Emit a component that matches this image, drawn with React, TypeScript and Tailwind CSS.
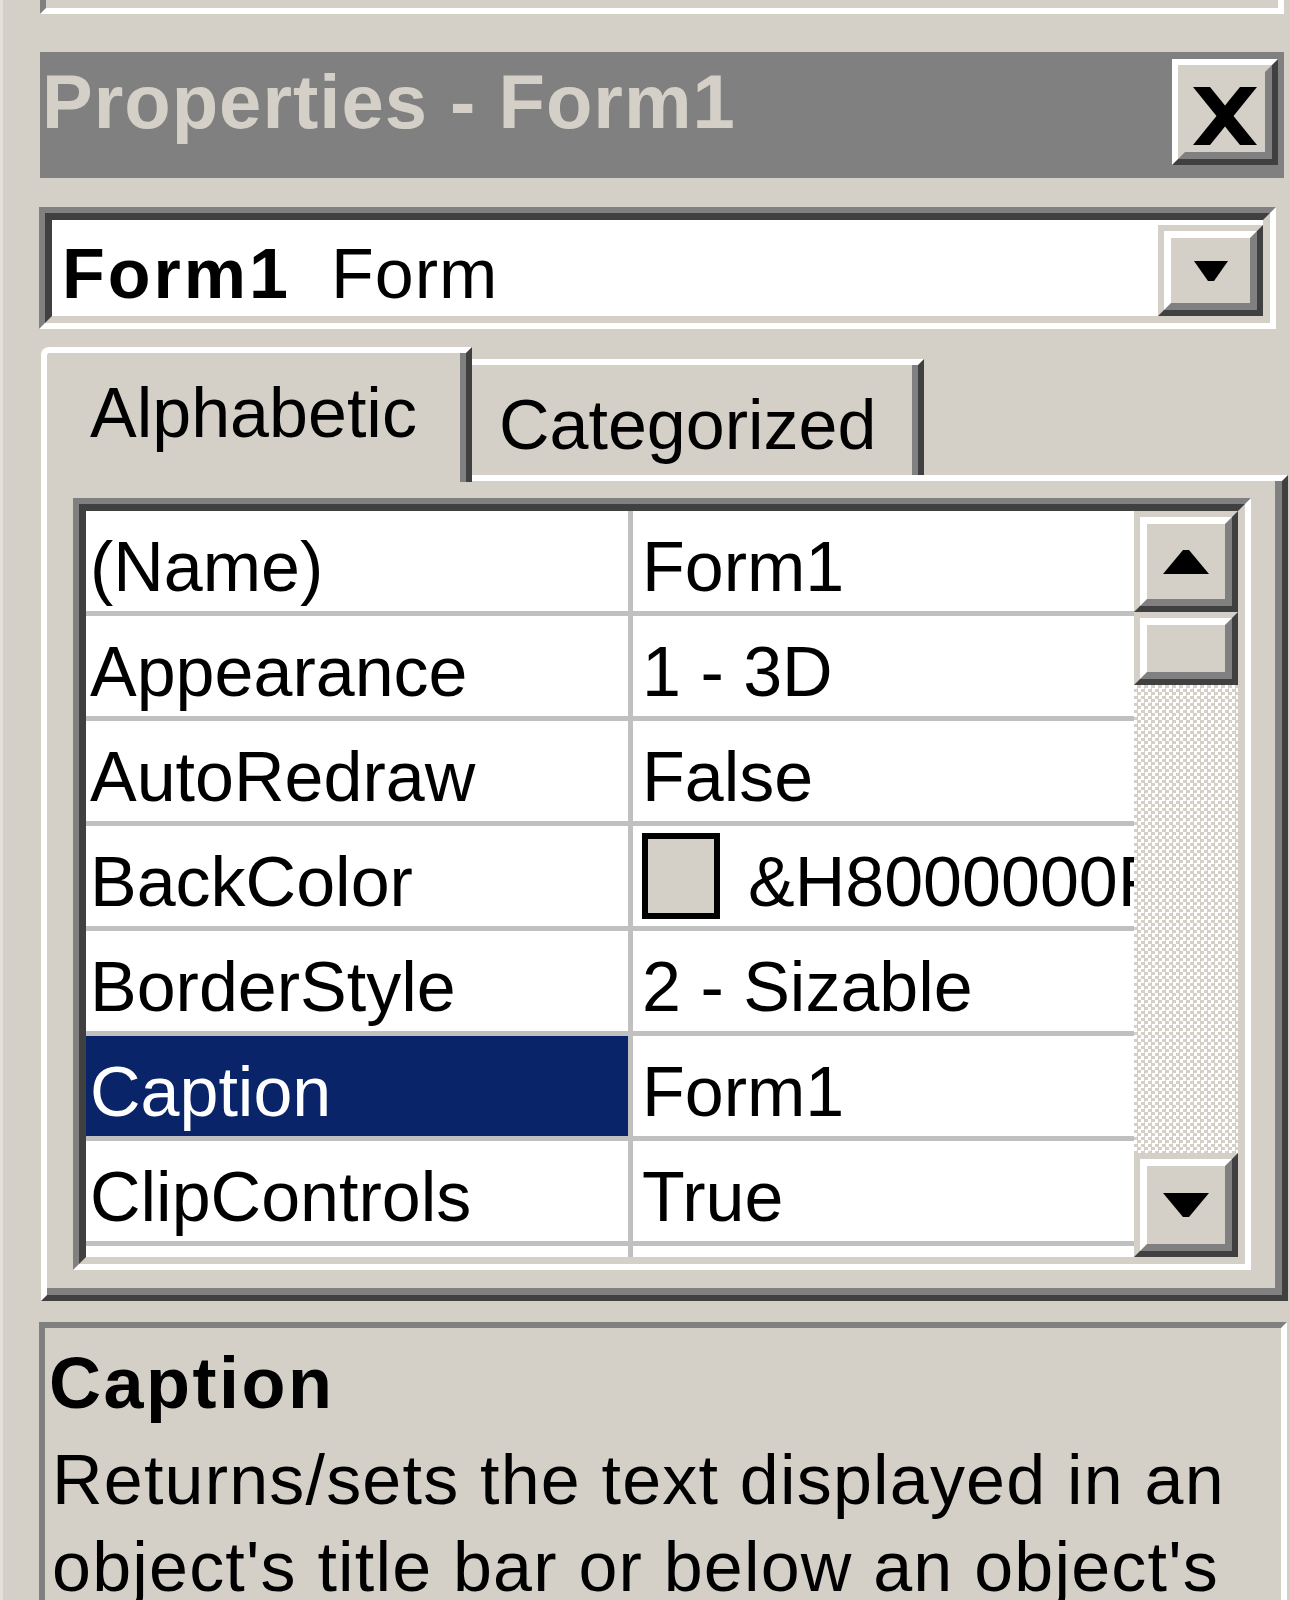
import type { ReactNode } from "react";

type Bevel = {
  className?: string;
  children?: ReactNode;
  caption?: boolean;
};

// classic 3D button face: light top/left, dark bottom/right, two pixels each
function Raised({ className = "", children, caption }: Bevel) {
  const outer = caption
    ? "border-t-white border-l-white"
    : "border-t-[#d4d0c8] border-l-[#d4d0c8]";
  const inner = caption
    ? "border-t-[#d4d0c8] border-l-[#d4d0c8]"
    : "border-t-white border-l-white";
  return (
    <div
      className={`shrink-0 border-t-[6px] border-l-[6px] border-r-[6px] border-b-[6px] border-r-[#404040] border-b-[#404040] ${outer} ${className}`}
    >
      <div
        className={`flex h-full w-full items-center justify-center border-t-[7px] border-l-[7px] border-r-[7px] border-b-[7px] border-r-[#808080] border-b-[#808080] bg-[#d4d0c8] ${inner}`}
      >
        {children}
      </div>
    </div>
  );
}

function CloseGlyph() {
  return (
    <svg width="64" height="58" viewBox="0 0 64 58" className="mt-[8px]">
      <polygon points="0,0 17,0 64,58 47,58" fill="#000" />
      <polygon points="47,0 64,0 17,58 0,58" fill="#000" />
    </svg>
  );
}

function ArrowDown({ w, h }: { w: number; h: number }) {
  return (
    <svg width={w} height={h} viewBox={`0 0 ${w} ${h}`}>
      <polygon points={`0,0 ${w},0 ${w / 2 + 3},${h} ${w / 2 - 3},${h}`} fill="#000" />
    </svg>
  );
}

function ArrowUp({ w, h }: { w: number; h: number }) {
  return (
    <svg width={w} height={h} viewBox={`0 0 ${w} ${h}`}>
      <polygon points={`${w / 2 - 3},0 ${w / 2 + 3},0 ${w},${h} 0,${h}`} fill="#000" />
    </svg>
  );
}

const ROWS: { name: string; value: string; swatch?: boolean; selected?: boolean }[] = [
  { name: "(Name)", value: "Form1" },
  { name: "Appearance", value: "1 - 3D" },
  { name: "AutoRedraw", value: "False" },
  { name: "BackColor", value: "&H8000000F&", swatch: true },
  { name: "BorderStyle", value: "2 - Sizable" },
  { name: "Caption", value: "Form1", selected: true },
  { name: "ClipControls", value: "True" },
  { name: "ControlBox", value: "True" },
];

function PropertyRow({ name, value, swatch, selected }: (typeof ROWS)[number]) {
  return (
    <div className="flex h-[105px] shrink-0 border-b-[5px] border-b-[#c0c0c0]">
      <div
        className={`w-[542px] shrink-0 overflow-hidden whitespace-nowrap pl-[4px] pt-[21px] ${
          selected ? "bg-[#0a246a] text-white" : ""
        }`}
      >
        {name}
      </div>
      <div className="w-[5px] shrink-0 bg-[#c0c0c0]" />
      <div className="flex min-w-0 flex-1 items-start overflow-hidden whitespace-nowrap pl-[9px]">
        {swatch && (
          <div className="mt-[7px] h-[86px] w-[78px] shrink-0 border-[6px] border-black bg-[#d4d0c8]" />
        )}
        <span className={`pt-[21px] ${swatch ? "ml-[28px]" : ""}`}>{value}</span>
      </div>
    </div>
  );
}

export default function App() {
  return (
    <div className="h-[1600px] w-[1290px] overflow-hidden border-l-[3px] border-l-[#e4e1db] bg-[#d4d0c8] font-['Liberation_Sans',Arial,sans-serif] text-black">
      {/* bottom of the docked window above */}
      <div className="ml-[37px] h-[14px] w-[1244px] border-l-[6px] border-b-[6px] border-r-[6px] border-l-[#808080] border-b-white border-r-white" />

      {/* caption bar */}
      <div className="ml-[37px] mt-[38px] flex h-[126px] w-[1244px] items-start justify-between bg-[#808080]">
        <span className="whitespace-nowrap pl-[2px] pt-[12px] text-[76px] font-bold leading-[76px] tracking-[1px] text-[#d4d0c8]">
          Properties - Form1
        </span>
        <Raised caption className="mr-[6px] mt-[7px] h-[106px] w-[106px]">
          <CloseGlyph />
        </Raised>
      </div>

      {/* object combo */}
      <div className="ml-[36px] mt-[29px] h-[122px] w-[1237px] border-t-[6px] border-l-[6px] border-r-[6px] border-b-[6px] border-t-[#808080] border-l-[#808080] border-r-white border-b-white">
        <div className="flex h-full w-full border-t-[7px] border-l-[7px] border-r-[7px] border-b-[7px] border-t-[#404040] border-l-[#404040] border-r-[#d4d0c8] border-b-[#d4d0c8] bg-white">
          <div className="flex flex-1 items-start whitespace-nowrap pl-[10px] pt-[19px] text-[70px] leading-[70px]">
            <span className="mr-[40px] font-bold tracking-[3px]">Form1</span>
            <span className="tracking-[1px]">Form</span>
          </div>
          <Raised className="mt-[5px] h-[91px] w-[105px]">
            <ArrowDown w={34} h={20} />
          </Raised>
        </div>
      </div>

      {/* tabs */}
      <div className="ml-[38px] mt-[18px] flex h-[128px] items-start text-[70px] leading-[70px]">
        <div className="relative z-10 h-[135px] w-[431px] rounded-tl-[8px] border-t-[6px] border-l-[6px] border-r-[6px] border-t-white border-l-white border-r-[#404040] bg-[#d4d0c8]">
          <div className="h-full border-r-[6px] border-r-[#808080] pl-[43px] pt-[25px]">Alphabetic</div>
        </div>
        <div className="mt-[12px] h-[116px] w-[452px] border-t-[6px] border-r-[6px] border-t-white border-r-[#404040]">
          <div className="h-full border-r-[6px] border-r-[#808080] pl-[27px] pt-[25px]">Categorized</div>
        </div>
      </div>

      {/* tab page */}
      <div className="ml-[38px] h-[826px] w-[1247px] border-t-[6px] border-l-[6px] border-r-[6px] border-b-[6px] border-t-white border-l-white border-r-[#404040] border-b-[#404040]">
        <div className="h-full w-full border-r-[7px] border-b-[7px] border-r-[#808080] border-b-[#808080] pl-[26px] pt-[17px]">
          <div className="h-[772px] w-[1178px] border-t-[6px] border-l-[6px] border-r-[6px] border-b-[6px] border-t-[#808080] border-l-[#808080] border-r-white border-b-white">
            <div className="flex h-full w-full overflow-hidden border-t-[7px] border-l-[7px] border-r-[7px] border-b-[7px] border-t-[#404040] border-l-[#404040] border-r-[#d4d0c8] border-b-[#d4d0c8] bg-white">
              <div className="flex min-w-0 flex-1 flex-col overflow-hidden text-[70px] leading-[70px]">
                {ROWS.map((r) => (
                  <PropertyRow key={r.name} {...r} />
                ))}
              </div>
              <div className="flex w-[104px] shrink-0 flex-col">
                <Raised className="h-[101px] w-[104px]">
                  <ArrowUp w={46} h={24} />
                </Raised>
                <Raised className="h-[73px] w-[104px]" />
                <div className="flex-1 bg-[repeating-conic-gradient(#d4d0c8_0%_25%,#ffffff_0%_50%)] bg-[length:7px_7px]" />
                <Raised className="h-[104px] w-[104px]">
                  <ArrowDown w={46} h={24} />
                </Raised>
              </div>
            </div>
          </div>
        </div>
      </div>

      {/* description pane */}
      <div className="ml-[36px] mt-[21px] h-[300px] w-[1248px] overflow-hidden border-t-[6px] border-l-[6px] border-r-[6px] border-t-[#808080] border-l-[#808080] border-r-white">
        <div className="pl-[4px] pt-[19px] text-[72px] font-bold leading-[72px] tracking-[2.5px]">Caption</div>
        <div className="mt-[18px] whitespace-nowrap pl-[7px] text-[70px] leading-[87px] tracking-[1.2px]">
          <div>Returns/sets the text displayed in an</div>
          <div>object's title bar or below an object's</div>
          <div>icon.</div>
        </div>
      </div>
    </div>
  );
}
